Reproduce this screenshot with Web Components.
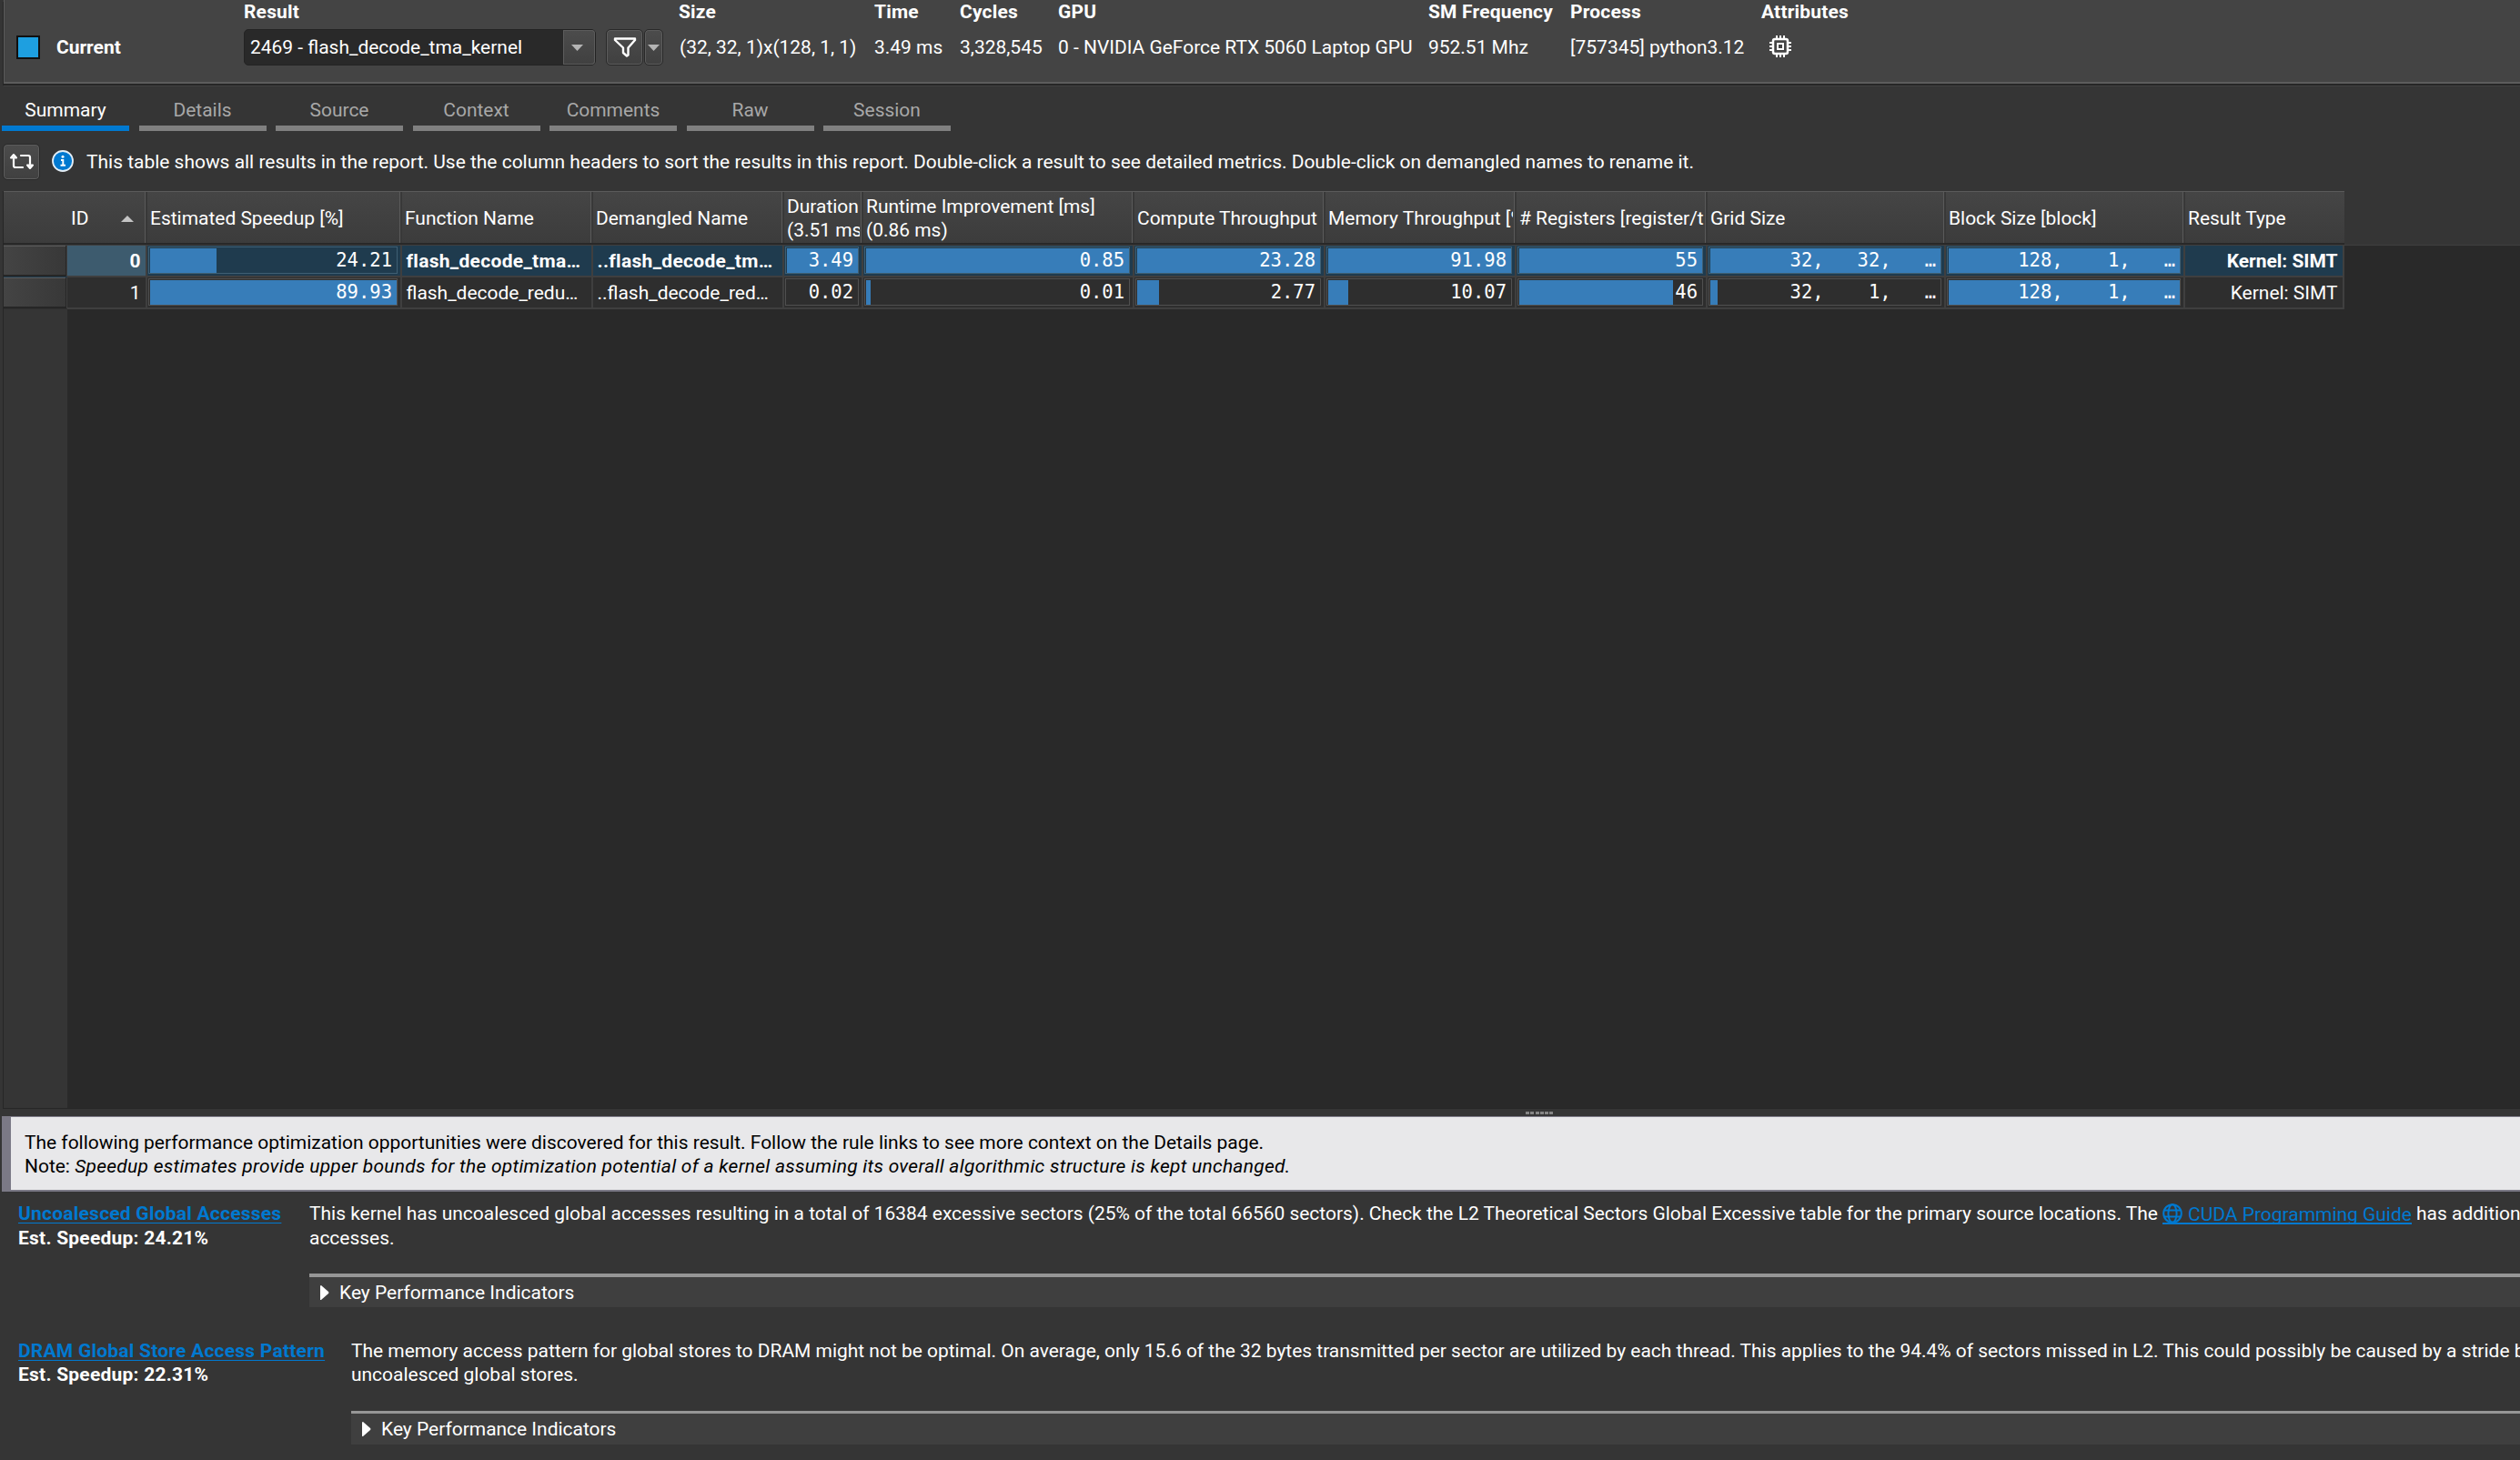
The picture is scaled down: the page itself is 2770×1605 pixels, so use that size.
<!DOCTYPE html>
<html lang="en">
<head>
<meta charset="utf-8">
<title>Summary</title>
<style>
  body {
    background: #353535;
    color: #ffffff;
    font-family: Roboto, 'Liberation Sans', sans-serif;
    font-size: 20.96px;
    height: 1605px;
    line-height: 26px;
    margin: 0;
    overflow: hidden;
    width: 2770px;
  }
</style>
</head>
<body>
<nc-report></nc-report>

<script>
class NCElement extends HTMLElement {
  constructor() {
    super();
    this.attachShadow( {mode: 'open'} );
  }

  connectedCallback() {
    this.shadowRoot.innerHTML = this.template();
  }

  attr( name ) {
    return this.getAttribute( name ) || '';
  }
}

// Label over value, used across the top bar
class NCField extends NCElement {
  template() {
    return /* template */ `
      <style>
        :host {
          box-sizing: border-box;
          display: flex;
          flex-direction: column;
          flex-shrink: 0;
          white-space: nowrap;
        }

        b {
          font-weight: 700;
          height: 32px;
          letter-spacing: 0.2px;
        }

        div {
          align-items: center;
          display: flex;
          height: 40px;
        }
      </style>
      <b>${this.attr( 'label' )}</b>
      <div><slot></slot></div>
    `;
  }
}

class NCButton extends NCElement {
  template() {
    return /* template */ `
      <style>
        :host {
          align-items: center;
          background: linear-gradient( #4c4c4c, #404040 );
          border: 1px solid #292929;
          border-radius: 5px;
          box-shadow: inset 0 0 0 1px #5c5c5c;
          box-sizing: border-box;
          display: inline-flex;
          flex-shrink: 0;
          height: 40px;
          justify-content: center;
        }
      </style>
      <slot></slot>
    `;
  }
}

class NCArrow extends NCElement {
  template() {
    const shapes = {
      down: ['13', '7', 'M0 0H13L6.5 7Z', '#b4b4b4'],
      up: ['14', '7', 'M0 7H14L7 0Z', '#c4c4c4'],
      right: ['10', '16', 'M0 1Q0 0 1 0L9 7Q10 8 9 9L1 16H0Z', '#ffffff']
    };
    const [w, h, d, fill] = shapes[this.attr( 'to' )];
    return /* template */ `
      <style>
        :host { display: inline-flex; flex-shrink: 0; }
      </style>
      <svg width="${w}" height="${h}"><path d="${d}" fill="${fill}"></path></svg>
    `;
  }
}

class NCCombo extends NCElement {
  template() {
    return /* template */ `
      <style>
        :host {
          background: #292929;
          border: 1px solid #232323;
          border-radius: 5px;
          box-sizing: border-box;
          display: flex;
          height: 40px;
          width: 387px;
        }

        span {
          flex-grow: 1;
          padding: 6px 0 0 6px;
        }

        div {
          align-items: center;
          background: linear-gradient( #4c4c4c, #404040 );
          border-radius: 0 4px 4px 0;
          box-shadow: inset 0 0 0 1px #5c5c5c;
          box-sizing: border-box;
          display: flex;
          padding-left: 9px;
          width: 35px;
        }
      </style>
      <span><slot></slot></span>
      <div><nc-arrow to="down"></nc-arrow></div>
    `;
  }
}

class NCTopBar extends NCElement {
  template() {
    return /* template */ `
      <style>
        :host {
          background: #444444;
          border-bottom: 2px solid #5c5c5c;
          border-left: 1px solid #5c5c5c;
          box-shadow: 0 2px 0 #262626, 0 3px 0 #414141, -1px 2px 0 #262626;
          box-sizing: border-box;
          display: flex;
          height: 92px;
          margin-left: 4px;
        }

        .current {
          align-items: flex-start;
          display: flex;
          font-weight: 700;
          gap: 18px;
          padding: 39px 0 0 13px;
          width: 250px;
        }

        .swatch {
          background: #1e9fe0;
          border: 2px solid #101010;
          box-sizing: border-box;
          height: 26px;
          width: 26px;
        }

        .filter { margin-left: 11px; width: 41px; }
        .more { margin-left: 1px; width: 21px; }
        .chip { margin: 0 0 2px 9px; }
      </style>
      <div class="current"><div class="swatch"></div>Current</div>
      <nc-field label="Result" style="width: 478px">
        <nc-combo>2469 - flash_decode_tma_kernel</nc-combo>
        <nc-button class="filter">
          <svg width="26" height="24" viewBox="0 0 26 24" fill="none" stroke="#ffffff" stroke-width="2.4" stroke-linejoin="round"><path d="M2 2.500H24V4L16.500 12.500V20.500L15 21.500L11 18V12.500L2 4Z"></path></svg>
        </nc-button>
        <nc-button class="more"><nc-arrow to="down"></nc-arrow></nc-button>
      </nc-field>
      <nc-field label="Size" style="width: 215px"><span style="margin-left: 1px">(32, 32, 1)x(128, 1, 1)</span></nc-field>
      <nc-field label="Time" style="width: 94px">3.49 ms</nc-field>
      <nc-field label="Cycles" style="width: 108px">3,328,545</nc-field>
      <nc-field label="GPU" style="width: 407px">0 - NVIDIA GeForce RTX 5060 Laptop GPU</nc-field>
      <nc-field label="SM Frequency" style="width: 156px">952.51 Mhz</nc-field>
      <nc-field label="Process" style="width: 210px">[757345] python3.12</nc-field>
      <nc-field label="Attributes">
        <svg class="chip" width="24" height="24" viewBox="0 0 24 24" fill="none" stroke="#ffffff">
          <rect x="4" y="4" width="16" height="16" rx="2" stroke-width="2.500"></rect>
          <rect x="9" y="9" width="6" height="6" stroke-width="2"></rect>
          <path stroke-width="2" d="M8 0V4M12 0V4M16 0V4M8 20V24M12 20V24M16 20V24M0 8H4M0 12H4M0 16H4M20 8H24M20 12H24M20 16H24"></path>
        </svg>
      </nc-field>
    `;
  }
}

class NCTab extends NCElement {
  template() {
    return /* template */ `
      <style>
        :host {
          border-bottom: 6px solid #808080;
          box-sizing: border-box;
          color: #a8a8a8;
          height: 36px;
          text-align: center;
          width: 140px;
        }

        :host( [active] ) {
          border-color: #0079d0;
          color: #ffffff;
        }
      </style>
      <slot></slot>
    `;
  }
}

// Value with a bar behind it, sized relative to the column maximum
class NCMeter extends NCElement {
  template() {
    return /* template */ `
      <style>
        :host {
          border: 1px solid var( --frame );
          box-sizing: border-box;
          display: flex;
          height: 30px;
          margin: 1px 5px 0 1px;
          overflow: hidden;
          padding: 1px 0 0 1px;
        }

        div {
          background: linear-gradient( to right, #377db9 ${this.attr( 'fill' )}%, transparent 0 );
          flex-grow: 1;
          font-family: 'DejaVu Sans Mono', monospace;
          font-size: 20.5px;
          line-height: 26px;
          margin-bottom: -1px;
          margin-right: -1px;
          padding-right: 6px;
          text-align: right;
          white-space: pre;
        }
      </style>
      <div>${this.textContent}</div>
    `;
  }
}

const COLUMNS = [
  [88, 'ID'],
  [280, 'Estimated Speedup [%]'],
  [210, 'Function Name'],
  [210, 'Demangled Name'],
  [87, 'Duration\n(3.51 ms)'],
  [298, 'Runtime Improvement [ms]\n(0.86 ms)'],
  [210, 'Compute Throughput [%]'],
  [210, 'Memory Throughput [%]'],
  [210, '# Registers [register/thread]'],
  [262, 'Grid Size'],
  [263, 'Block Size [block]'],
  [175, 'Result Type']
];

// Meter cells are [text, fill percent]
const ROWS = [
  ['0', ['24.21', 26.92], 'flash_decode_tma…', '..flash_decode_tm…', ['3.49', 100], ['0.85', 100], ['23.28', 100], ['91.98', 100], ['55', 100], ['32,   32,   …', 100], ['128,    1,   …', 100], 'Kernel: SIMT'],
  ['1', ['89.93', 100], 'flash_decode_redu…', '..flash_decode_red…', ['0.02', 0.6], ['0.01', 1.8], ['2.77', 11.9], ['10.07', 10.95], ['46', 83.6], ['32,    1,   …', 3.12], ['128,    1,   …', 100], 'Kernel: SIMT']
];

class NCTable extends NCElement {
  template() {
    const cell = ( value, index ) => {
      if( Array.isArray( value ) ) {
        return `<div class="cell"><nc-meter fill="${value[1]}">${value[0]}</nc-meter></div>`;
      }
      const side = index === 0 || index === 11 ? 'right' : 'left';
      return `<div class="cell ${side}">${value}</div>`;
    };

    return /* template */ `
      <style>
        :host {
          border-left: 1px solid #262626;
          box-sizing: border-box;
          display: flex;
          flex-direction: column;
          height: 1009px;
          margin-left: 3px;
        }

        .head, .row {
          display: grid;
          flex-shrink: 0;
          grid-template-columns: 70px ${COLUMNS.map( ( c ) => c[0] + 'px' ).join( ' ' )};
          width: max-content;
        }

        .head {
          height: 60px;
        }

        .head > div {
          align-items: center;
          background: linear-gradient( #454545, #3c3c3c );
          border-bottom: 2px solid #282828;
          border-top: 1px solid #5a5a5a;
          box-shadow: inset -2px 0 0 #383838, inset -3px 0 0 #5a5a5a;
          box-sizing: border-box;
          display: flex;
          height: 59px;
          overflow: hidden;
          padding: 2px 4px 0 3px;
        }

        .head > div:first-child,
        .head > div:last-child {
          box-shadow: none;
        }

        .head > div:nth-child( 2 ) {
          padding: 2px 15px 0 4px;
          justify-content: space-between;
        }

        .head span {
          overflow: hidden;
          white-space: pre;
        }

        .body {
          background: linear-gradient( to right, #353535 70px, #292929 0 );
          border-bottom: 1px solid #262626;
          border-top: 1px solid #3f3f3f;
          flex-grow: 1;
          margin-top: -1px;
        }

        .row {
          --frame: #505050;
          background: #2e2e2e;
          height: 35px;
        }

        .row.selected {
          --frame: #3f5f73;
          background: #1f3b4e;
          font-weight: 700;
        }

        .row.selected .cell.left {
          letter-spacing: 0.32px;
        }

        .gutter {
          background: linear-gradient( to right, #444444, #383838 );
          border: solid #262626;
          border-width: 0 1px 2px 0;
          box-shadow: inset 0 1px 0 #5a5a5a, 1px 0 0 #3f3f3f;
          box-sizing: border-box;
          height: 34px;
          width: 69px;
        }

        .cell {
          border: solid #3f3f3f;
          border-width: 0 2px 2px 0;
          box-sizing: border-box;
          height: 35px;
          overflow: hidden;
          white-space: nowrap;
        }

        .cell nc-meter {
          font-weight: 400;
          margin-right: 3px;
        }

        .left { padding: 4px 0 0 4.5px; }
        .right { padding: 4px 5.5px 0 0; text-align: right; }
        .selected .gutter + .cell { background: #3d5b6e; }
      </style>
      <div class="head">
        <div></div>
        ${COLUMNS.map( ( c, i ) => `<div><span>${c[1]}</span>${i === 0 ? '<nc-arrow to="up"></nc-arrow>' : ''}</div>` ).join( '' )}
      </div>
      <div class="body">
        ${ROWS.map( ( row, i ) => `<div class="row ${i === 0 ? 'selected' : ''}"><div class="gutter"></div>${row.map( cell ).join( '' )}</div>` ).join( '' )}
      </div>
    `;
  }
}

class NCSplitter extends NCElement {
  template() {
    return /* template */ `
      <style>
        :host {
          box-sizing: border-box;
          display: flex;
          gap: 1.3px;
          height: 8px;
          padding: 3px 0 0 1677px;
        }

        i {
          background: #858585;
          height: 3px;
          width: 4px;
        }
      </style>
      ${'<i></i>'.repeat( 6 )}
    `;
  }
}

class NCMessage extends NCElement {
  template() {
    return /* template */ `
      <style>
        :host {
          background: #e8e8ea;
          border: solid #7b7986;
          border-width: 1px 0 2px 10px;
          box-sizing: border-box;
          color: #000000;
          display: block;
          height: 83px;
          margin-left: 2px;
          padding: 15px 0 0 15px;
          white-space: nowrap;
        }
      </style>
      <slot></slot>
    `;
  }
}

class NCRule extends NCElement {
  template() {
    return /* template */ `
      <style>
        :host {
          box-sizing: border-box;
          display: flex;
          line-height: var( --pitch, 26px );
          overflow: hidden;
          padding-left: 20px;
          white-space: nowrap;
        }

        .title {
          flex-shrink: 0;
          font-weight: 700;
          letter-spacing: 0.25px;
          width: var( --title );
        }

        .title a {
          color: #0079d0;
          text-decoration: underline;
          text-decoration-skip-ink: none;
          text-decoration-thickness: 1px;
          text-underline-offset: 3px;
        }

        .detail {
          flex-grow: 1;
          min-width: 0;
        }

        .text {
          height: 79px;
        }

        .kpi {
          align-items: center;
          background: #3f3f3f;
          border-top: var( --bar, 3px ) solid #969696;
          box-sizing: border-box;
          display: flex;
          gap: 11px;
          height: 37px;
          line-height: 26px;
          padding-left: 12px;
        }
      </style>
      <div class="title">
        <a>${this.attr( 'name' )}</a><br>Est. Speedup: ${this.attr( 'speedup' )}
      </div>
      <div class="detail">
        <div class="text"><slot></slot></div>
        <div class="kpi"><nc-arrow to="right"></nc-arrow>Key Performance Indicators</div>
      </div>
    `;
  }
}

class NCDocLink extends NCElement {
  template() {
    return /* template */ `
      <style>
        :host {
          border-bottom: 2px solid #0079d0;
          color: #0079d0;
          display: inline-flex;
          gap: 6px;
          height: 20px;
          line-height: 22px;
          vertical-align: -4px;
        }

        svg { margin-top: -1px; }
      </style>
      <svg width="22" height="22" viewBox="0 0 22 22" fill="none" stroke="#0079d0" stroke-width="2"><circle cx="11" cy="11" r="9.800"></circle><ellipse cx="11" cy="11" rx="4.600" ry="9.800"></ellipse><path d="M2 7.500H20M2 14.500H20"></path></svg>
      <slot></slot>
    `;
  }
}

class NCReport extends NCElement {
  template() {
    return /* template */ `
      <style>
        :host {
          display: flex;
          flex-direction: column;
          height: 1605px;
          overflow: hidden;
        }

        .tabs {
          display: flex;
          gap: 10.5px;
          padding: 16px 0 0 2px;
        }

        .hint {
          align-items: center;
          display: flex;
          height: 40px;
          margin: 14px 0 12px 3px;
        }

        .hint nc-button { width: 41px; }
        .hint > svg { margin: 0 14px 2px 13px; }
        .note { letter-spacing: 0.28px; }
      </style>
      <nc-top-bar></nc-top-bar>
      <div class="tabs">
        <nc-tab active>Summary</nc-tab>
        <nc-tab>Details</nc-tab>
        <nc-tab>Source</nc-tab>
        <nc-tab>Context</nc-tab>
        <nc-tab>Comments</nc-tab>
        <nc-tab>Raw</nc-tab>
        <nc-tab>Session</nc-tab>
      </div>
      <div class="hint">
        <nc-button>
          <svg width="28" height="20" viewBox="0 0 28 20" fill="none" stroke="#ffffff" stroke-width="2.2" stroke-linecap="round" stroke-linejoin="round"><path d="M15 16H7Q5 16 5 14V7M13 3H21Q23 3 23 5V12"></path><path fill="#aaaaaa" stroke-width="2" d="M2 5.500L5 2L8 5.500ZM20 13.500L23 17L26 13.500Z"></path></svg>
        </nc-button>
        <svg width="24" height="24" viewBox="0 0 24 24"><circle cx="12" cy="12" r="11" fill="#0079d0" stroke="#e4eef6" stroke-width="1.8"></circle><circle cx="12" cy="7.300" r="1.500" fill="#ffffff"></circle><path d="M10 11H12.300V16.500M9.500 16.800H15" fill="none" stroke="#ffffff" stroke-width="1.900"></path></svg>
        <span>This table shows all results in the report. Use the column headers to sort the results in this report. Double-click a result to see detailed metrics. Double-click on demangled names to rename it.</span>
      </div>
      <nc-table></nc-table>
      <nc-splitter></nc-splitter>
      <nc-message>The following performance optimization opportunities were discovered for this result. Follow the rule links to see more context on the Details page.<br>Note: <i class="note">Speedup estimates provide upper bounds for the optimization potential of a kernel assuming its overall algorithmic structure is kept unchanged.</i></nc-message>
      <nc-rule style="--pitch: 27px; --bar: 4px; --title: 320px; margin-top: 11px" name="Uncoalesced Global Accesses" speedup="24.21%">This kernel has uncoalesced global accesses resulting in a total of 16384 excessive sectors (25% of the total 66560 sectors). Check the L2 Theoretical Sectors Global Excessive table for the primary source locations. The <nc-doc-link>CUDA Programming Guide</nc-doc-link> has additional<br>accesses.</nc-rule>
      <nc-rule style="--title: 366px; margin-top: 35px" name="DRAM Global Store Access Pattern" speedup="22.31%">The memory access pattern for global stores to DRAM might not be optimal. On average, only 15.6 of the 32 bytes transmitted per sector are utilized by each thread. This applies to the 94.4% of sectors missed in L2. This could possibly be caused by a stride between<br>uncoalesced global stores.</nc-rule>
    `;
  }
}

window.customElements.define( 'nc-field', NCField );
window.customElements.define( 'nc-button', NCButton );
window.customElements.define( 'nc-arrow', NCArrow );
window.customElements.define( 'nc-combo', NCCombo );
window.customElements.define( 'nc-top-bar', NCTopBar );
window.customElements.define( 'nc-tab', NCTab );
window.customElements.define( 'nc-meter', NCMeter );
window.customElements.define( 'nc-table', NCTable );
window.customElements.define( 'nc-splitter', NCSplitter );
window.customElements.define( 'nc-message', NCMessage );
window.customElements.define( 'nc-rule', NCRule );
window.customElements.define( 'nc-doc-link', NCDocLink );
window.customElements.define( 'nc-report', NCReport );
</script>
</body>
</html>
